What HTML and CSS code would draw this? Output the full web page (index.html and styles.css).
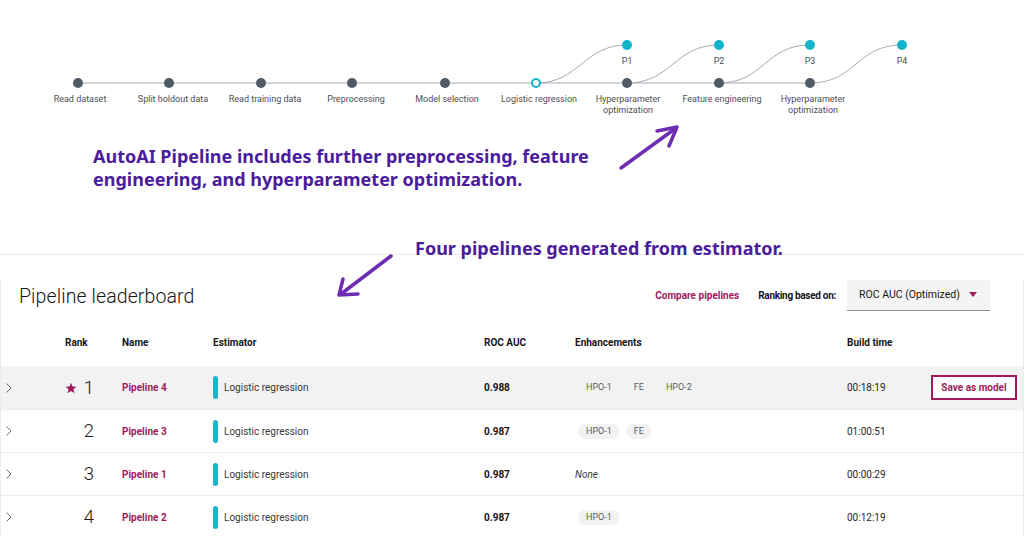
FILE: index.html
```html
<!DOCTYPE html>
<html lang="en">
<head>
<meta charset="utf-8">
<title>AutoAI pipeline leaderboard</title>
<link rel="stylesheet" href="styles.css">
</head>
<body>
<div class="page">
  <section class="flow">
    <svg class="flow-diagram" width="1024" height="130" viewBox="0 0 1024 130">
      <g class="links">
        <line x1="78" y1="83" x2="810" y2="83"/>
        <path d="M536 83 C 580 83, 583 45, 627 45"/>
        <path d="M627 83 C 672 83, 674 45, 719 45"/>
        <path d="M719 83 C 764 83, 765 45, 810 45"/>
        <path d="M810 83 C 856 83, 856 45, 902 45"/>
      </g>
      <g class="nodes">
        <circle cx="78" cy="83" r="5"/>
        <circle cx="169" cy="83" r="5"/>
        <circle cx="261" cy="83" r="5"/>
        <circle cx="352" cy="83" r="5"/>
        <circle cx="445" cy="83" r="5"/>
        <circle class="hollow" cx="536" cy="83" r="4"/>
        <circle cx="627" cy="83" r="5"/>
        <circle cx="719" cy="83" r="5"/>
        <circle cx="810" cy="83" r="5"/>
        <circle class="pnode" cx="627" cy="45" r="5"/>
        <circle class="pnode" cx="719" cy="45" r="5"/>
        <circle class="pnode" cx="810" cy="45" r="5"/>
        <circle class="pnode" cx="902" cy="45" r="5"/>
      </g>
      <g class="labels">
        <text x="80" y="102">Read dataset</text>
        <text x="173" y="102">Split holdout data</text>
        <text x="265" y="102">Read training data</text>
        <text x="356" y="102">Preprocessing</text>
        <text x="447" y="102">Model selection</text>
        <text x="539" y="102">Logistic regression</text>
        <text x="628" y="102">Hyperparameter</text>
        <text x="628" y="113">optimization</text>
        <text x="722" y="102">Feature engineering</text>
        <text x="813" y="102">Hyperparameter</text>
        <text x="813" y="113">optimization</text>
        <text x="627" y="64">P1</text>
        <text x="719" y="64">P2</text>
        <text x="810" y="64">P3</text>
        <text x="902" y="64">P4</text>
      </g>
    </svg>
  </section>

  <section class="board">
    <div class="toolbar">
      <h1 class="title">Pipeline leaderboard</h1>
      <div class="actions">
        <a class="compare" href="#">Compare pipelines</a>
        <span class="rank-label">Ranking based on:</span>
        <div class="select">
          <span>ROC AUC (Optimized)</span>
          <svg class="caret" width="8" height="5" viewBox="0 0 8 5"><path d="M0 0 H8 L4 5 Z"/></svg>
        </div>
      </div>
    </div>

    <div class="table">
      <div class="row head">
        <span></span>
        <span class="c-rank">Rank</span>
        <span class="c-name">Name</span>
        <span>Estimator</span>
        <span>ROC AUC</span>
        <span>Enhancements</span>
        <span>Build time</span>
        <span></span>
      </div>

      <div class="row selected">
        <span class="chev"><svg width="6" height="10" viewBox="0 0 6 10"><path d="M0.5 0.5 L5 5 L0.5 9.5"/></svg></span>
        <span class="c-rank num"><svg class="star" width="12" height="12" viewBox="0 0 24 24"><path d="M12 1.5 L15 9 L23 9.3 L16.8 14.3 L19 22.3 L12 17.8 L5 22.3 L7.2 14.3 L1 9.3 L9 9 Z"/></svg>1</span>
        <span class="c-name pipe">Pipeline 4</span>
        <span class="est"><i class="bar"></i>Logistic regression</span>
        <span class="score">0.988</span>
        <span class="chips"><b class="chip">HPO-1</b><b class="chip">FE</b><b class="chip">HPO-2</b></span>
        <span class="time">00:18:19</span>
        <span><button class="save">Save as model</button></span>
      </div>

      <div class="row">
        <span class="chev"><svg width="6" height="10" viewBox="0 0 6 10"><path d="M0.5 0.5 L5 5 L0.5 9.5"/></svg></span>
        <span class="c-rank num">2</span>
        <span class="c-name pipe">Pipeline 3</span>
        <span class="est"><i class="bar"></i>Logistic regression</span>
        <span class="score">0.987</span>
        <span class="chips"><b class="chip">HPO-1</b><b class="chip">FE</b></span>
        <span class="time">01:00:51</span>
        <span></span>
      </div>

      <div class="row">
        <span class="chev"><svg width="6" height="10" viewBox="0 0 6 10"><path d="M0.5 0.5 L5 5 L0.5 9.5"/></svg></span>
        <span class="c-rank num">3</span>
        <span class="c-name pipe">Pipeline 1</span>
        <span class="est"><i class="bar"></i>Logistic regression</span>
        <span class="score">0.987</span>
        <span class="chips"><em class="none">None</em></span>
        <span class="time">00:00:29</span>
        <span></span>
      </div>

      <div class="row">
        <span class="chev"><svg width="6" height="10" viewBox="0 0 6 10"><path d="M0.5 0.5 L5 5 L0.5 9.5"/></svg></span>
        <span class="c-rank num">4</span>
        <span class="c-name pipe">Pipeline 2</span>
        <span class="est"><i class="bar"></i>Logistic regression</span>
        <span class="score">0.987</span>
        <span class="chips"><b class="chip">HPO-1</b></span>
        <span class="time">00:12:19</span>
        <span></span>
      </div>
    </div>
  </section>

  <p class="note note-flow">AutoAI Pipeline includes further preprocessing, feature<br>engineering, and hyperparameter optimization.</p>
  <p class="note note-board">Four pipelines generated from estimator.</p>
  <svg class="arrows" width="1024" height="536" viewBox="0 0 1024 536">
    <path d="M621 168 L676 128"/>
    <path d="M657 131 L677 127 L669 146"/>
    <path d="M391 256 L341 294"/>
    <path d="M343 279 L339 295 L358 294"/>
  </svg>
</div>
</body>
</html>
```

FILE: styles.css
```css
* { box-sizing: border-box; }

html, body {
  margin: 0;
  padding: 0;
  background: #ffffff;
}

body {
  font-family: Roboto, "Liberation Sans", Arial, sans-serif;
  color: #161616;
  width: 1024px;
  height: 536px;
  overflow: hidden;
}

.page {
  position: relative;
  width: 1024px;
  height: 536px;
}

/* ---------- pipeline flow ---------- */
.flow {
  height: 255px;
  border-bottom: 1px solid #ebebeb;
}

.flow-diagram {
  display: block;
}

.links line,
.links path {
  fill: none;
  stroke: #a3abb4;
  stroke-width: 1;
}

.nodes circle {
  fill: #4e5a65;
}

.nodes .pnode {
  fill: #12b4cc;
}

.nodes .hollow {
  fill: #ffffff;
  stroke: #12b4cc;
  stroke-width: 2;
}

.labels text {
  font-family: Roboto, "Liberation Sans", sans-serif;
  font-size: 9px;
  fill: #4a4f55;
  text-anchor: middle;
}

/* ---------- annotations ---------- */
.note {
  position: absolute;
  margin: 0;
  font-family: "Noto Sans", "Open Sans", sans-serif;
  font-weight: 700;
  color: #4b1c9c;
  white-space: nowrap;
}

.note-flow {
  left: 93px;
  top: 145px;
  font-size: 18px;
  line-height: 23px;
}

.note-board {
  left: 415px;
  top: 237px;
  font-size: 18px;
  line-height: 23px;
}

.arrows {
  position: absolute;
  left: 0;
  top: 0;
  pointer-events: none;
}

.arrows path {
  fill: none;
  stroke: #6c2db3;
  stroke-width: 3.5;
  stroke-linecap: round;
  stroke-linejoin: round;
}

/* ---------- leaderboard ---------- */
.board {
  border-left: 1px solid #ececec;
  border-right: 1px solid #ececec;
  height: 281px;
}

.toolbar {
  display: flex;
  align-items: center;
  justify-content: space-between;
  margin-top: 25px;
  height: 30px;
  padding: 0 33px 0 18px;
}

.title {
  margin: 0;
  padding-top: 4px;
  font-size: 19.5px;
  font-weight: 300;
  line-height: 30px;
  color: #161616;
  letter-spacing: 0.1px;
}

.actions {
  display: flex;
  align-items: center;
  height: 30px;
}

.compare {
  color: #a2195b;
  font-size: 10px;
  font-weight: 700;
  text-decoration: none;
  margin-right: 19px;
}

.rank-label {
  font-size: 10px;
  font-weight: 700;
  color: #161616;
  margin-right: 11px;
  letter-spacing: -0.3px;
}

.select {
  width: 143px;
  height: 31px;
  background: #f4f4f4;
  border-bottom: 1px solid #8d8d8d;
  display: flex;
  align-items: center;
  justify-content: space-between;
  padding: 0 13px 0 12px;
  font-size: 10.5px;
  color: #161616;
}

.caret path {
  fill: #a2195b;
}

/* ---------- table ---------- */
.table {
  margin-top: 8px;
}

.row {
  display: grid;
  grid-template-columns: 57px 36px 119px 271px 91px 272px 84px 1fr;
  align-items: center;
  height: 43px;
  border-bottom: 1px solid #ececec;
  font-size: 10px;
  color: #262626;
}

.row.head {
  height: 48px;
  border-bottom: none;
  font-weight: 700;
  color: #161616;
}

.row.head .c-rank {
  padding-left: 7px;
}

.row.selected {
  background: #f2f2f2;
  height: 44px;
}

.chev {
  padding-left: 5px;
  display: flex;
  align-items: center;
}

.chev path {
  fill: none;
  stroke: #6f6f6f;
  stroke-width: 1;
}

.num {
  display: flex;
  align-items: center;
  justify-content: flex-end;
  font-size: 18.5px;
  font-weight: 300;
  color: #161616;
}

.star {
  margin-right: 7px;
}

.star path {
  fill: #a2195b;
}

.c-name {
  padding-left: 28px;
}

.pipe {
  color: #a2195b;
  font-weight: 700;
}

.est {
  display: flex;
  align-items: center;
  color: #393939;
}

.bar {
  display: inline-block;
  width: 5px;
  height: 23px;
  border-radius: 3px;
  background: #1ab4cb;
  margin-right: 6px;
}

.score {
  font-weight: 700;
  color: #161616;
}

.chips {
  display: flex;
  align-items: center;
  gap: 6px;
  padding-left: 3px;
}

.chip {
  display: inline-block;
  height: 15px;
  line-height: 15px;
  padding: 0 8px;
  border-radius: 8px;
  background: #f2f2f2;
  font-size: 9px;
  font-weight: 400;
  color: #5a5f66;
}

.none {
  font-style: italic;
  color: #393939;
  margin-left: -3px;
}

.time {
  color: #262626;
}

.save {
  width: 86px;
  height: 25px;
  border: 2px solid #a2195b;
  background: #ffffff;
  color: #a2195b;
  font-family: Roboto, "Liberation Sans", sans-serif;
  font-size: 10px;
  font-weight: 700;
  padding: 0;
  cursor: pointer;
}
```
